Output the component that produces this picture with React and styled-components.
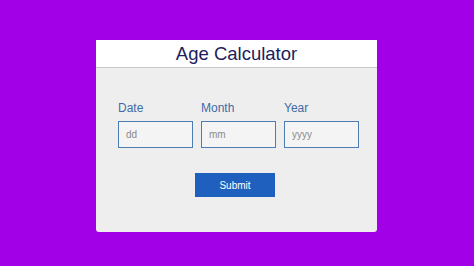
import React from "react";
import styled, { createGlobalStyle } from "styled-components";

const GlobalStyle = createGlobalStyle`
  html, body {
    margin: 0;
    padding: 0;
  }
  body {
    background-color: #a200e6;
    font-family: "Liberation Sans", Arial, sans-serif;
    width: 474px;
    height: 266px;
    overflow: hidden;
  }
`;

const Page = styled.div`
  display: flex;
  padding: 40px 0 0 96px;
`;

const Card = styled.div`
  width: 281px;
  height: 192px;
  background-color: #eeeeee;
  border-radius: 0 0 3px 3px;
  display: flex;
  flex-direction: column;
`;

const Header = styled.div`
  height: 27px;
  background-color: #ffffff;
  border-bottom: 1px solid #c8c8c8;
  display: flex;
  align-items: center;
  justify-content: center;
`;

const Title = styled.h1`
  margin: 0;
  font-size: 18.5px;
  font-weight: normal;
  color: #1c1c5e;
`;

const Body = styled.div`
  padding: 33px 17px 0 22px;
  display: flex;
  flex-direction: column;
  align-items: flex-start;
`;

const Fields = styled.div`
  display: flex;
  gap: 8px;
`;

const Field = styled.label`
  display: flex;
  flex-direction: column;
  gap: 6px;
  color: #3e6ba6;
  font-size: 12px;
`;

const Input = styled.input`
  box-sizing: border-box;
  width: 75px;
  height: 27px;
  border: 1px solid #4d7db5;
  background-color: #f4f4f4;
  padding: 0 7px;
  font-family: "Liberation Sans", Arial, sans-serif;
  font-size: 10px;
  outline: none;
  &::placeholder {
    color: #8a8a8a;
  }
`;

const Button = styled.button`
  margin-top: 25px;
  margin-left: 77px;
  width: 80px;
  height: 24px;
  border: none;
  background-color: #1f5fbe;
  color: #ffffff;
  font-family: "Liberation Sans", Arial, sans-serif;
  font-size: 10px;
  cursor: pointer;
`;

const fields = [
  { label: "Date", placeholder: "dd" },
  { label: "Month", placeholder: "mm" },
  { label: "Year", placeholder: "yyyy" },
];

const App = () => {
  return (
    <>
      <GlobalStyle />
      <Page>
        <Card>
          <Header>
            <Title>Age Calculator</Title>
          </Header>
          <Body>
            <Fields>
              {fields.map((f) => (
                <Field key={f.label}>
                  {f.label}
                  <Input type="text" placeholder={f.placeholder} />
                </Field>
              ))}
            </Fields>
            <Button>Submit</Button>
          </Body>
        </Card>
      </Page>
    </>
  );
};

export default App;
